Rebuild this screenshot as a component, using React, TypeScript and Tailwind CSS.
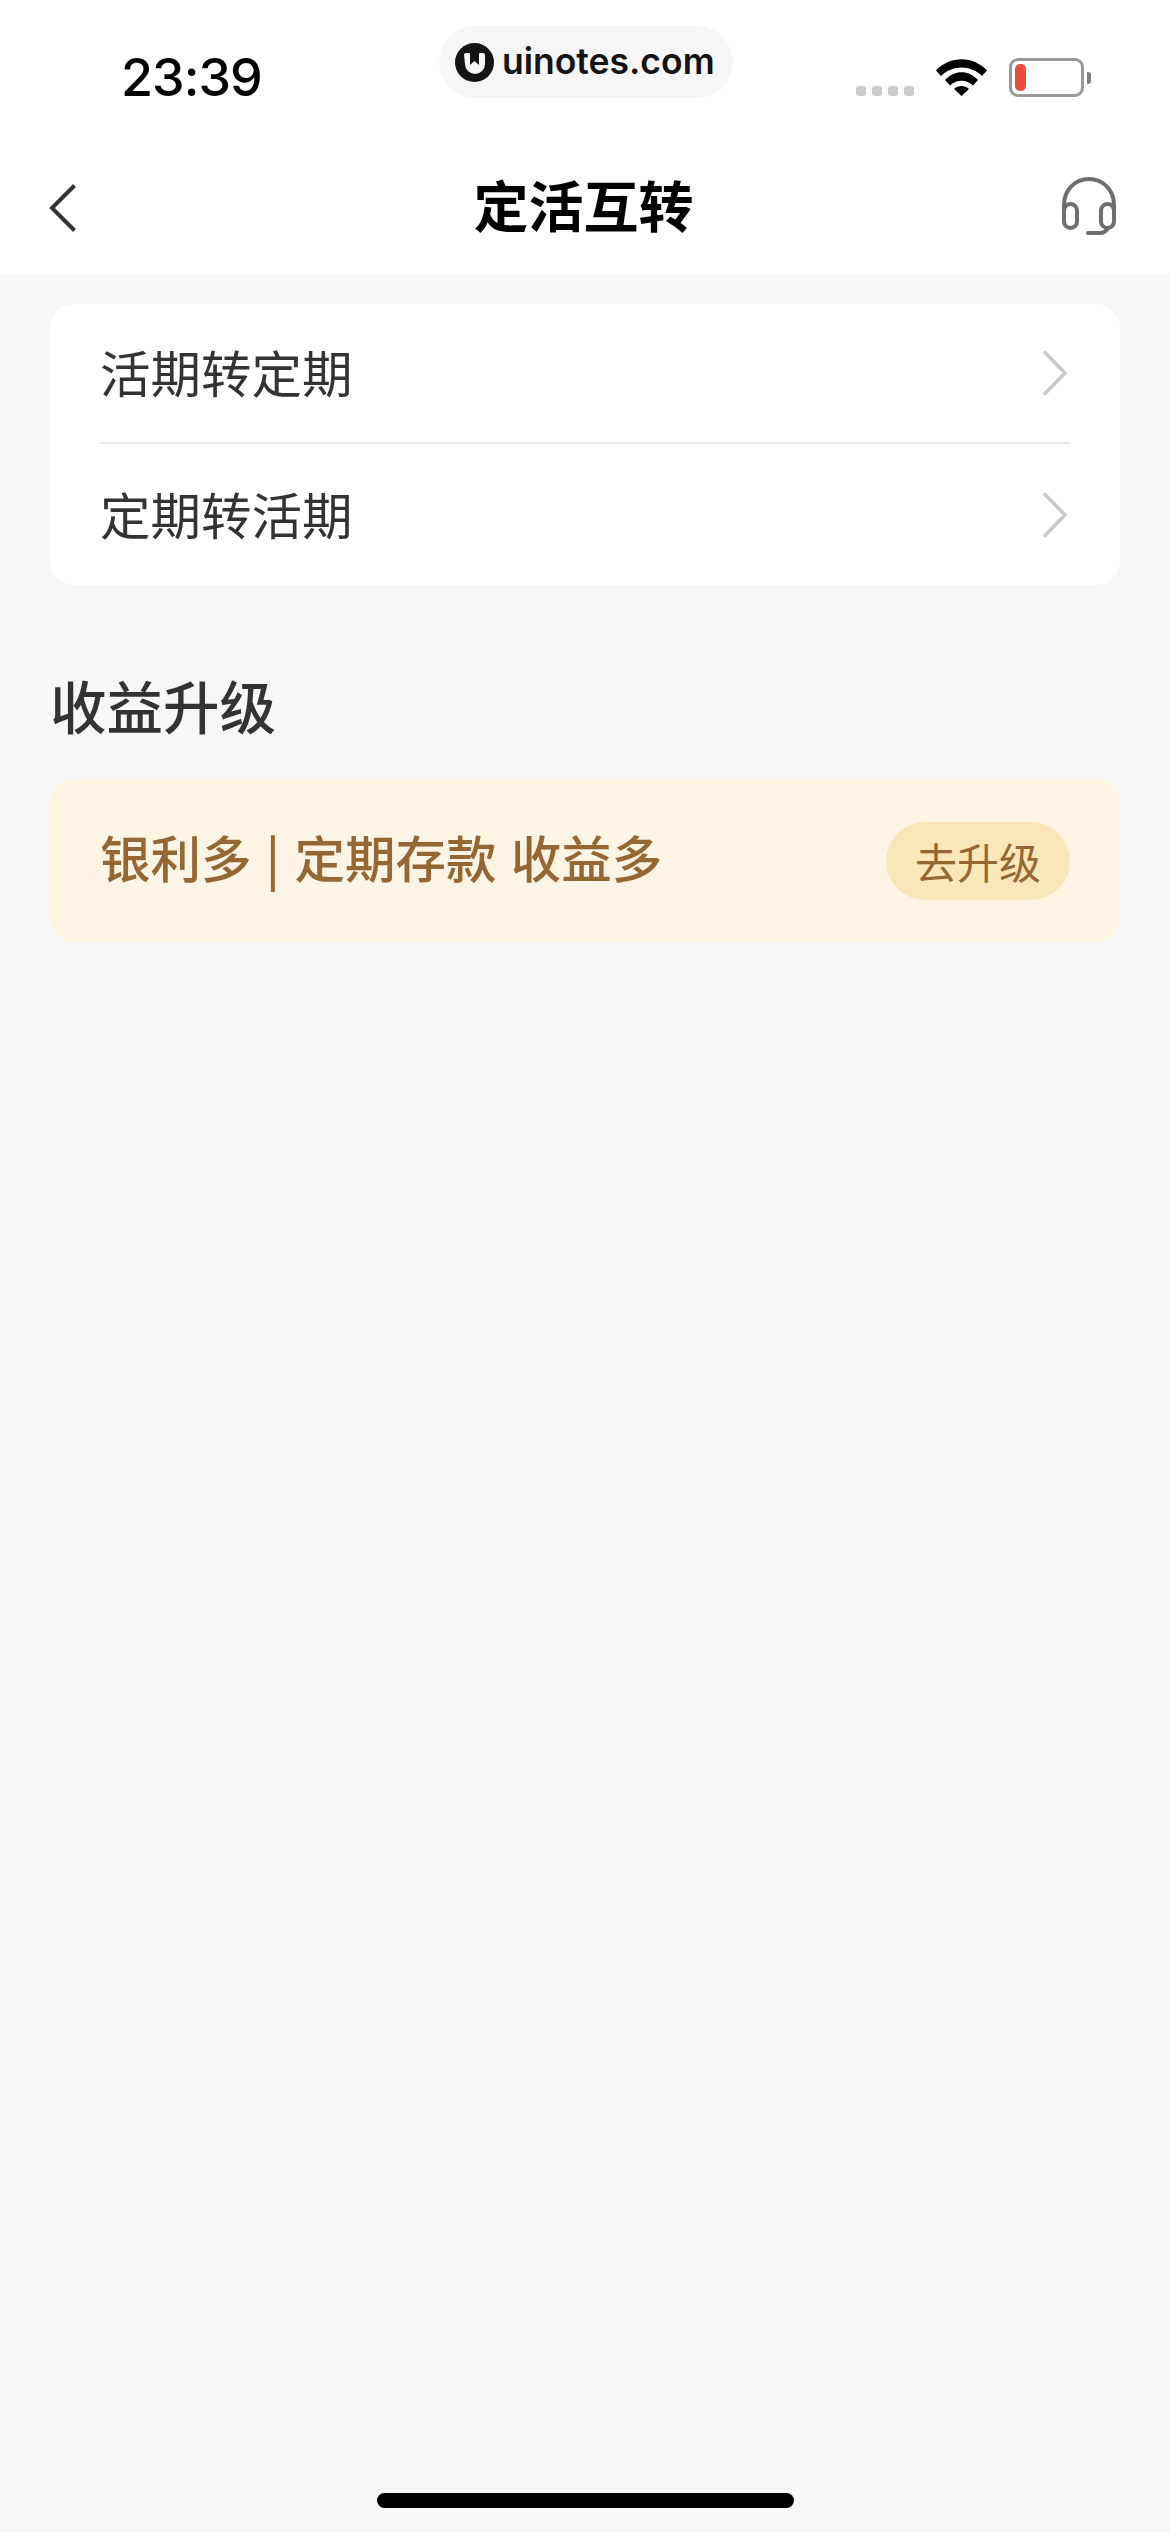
const FONT_CJK = "font-['Noto_Sans_CJK_SC','Noto_Sans',sans-serif]";

function Logo() {
  return (
    <svg width="39" height="39" viewBox="0 0 39 39" className="shrink-0">
      <circle cx="19.5" cy="19.5" r="19.5" fill="#141414" />
      <path
        d="M9 12a2 2 0 0 1 2-2h3a1 1 0 0 1 1 1v11l4.500-4 4.500 4V11a1 1 0 0 1 1-1h3a2 2 0 0 1 2 2v9a10 10 0 0 1-20 0z"
        fill="#f6f6f6"
      />
    </svg>
  );
}

function Wifi() {
  return (
    <svg width="51" height="37" viewBox="0 0 51 37" className="mt-[59px] ml-[22px]">
      <path d="M0 11.500C14-3.500 37-3.500 51 11.500l-5 5.500C34.500 5.500 16.500 5.500 5 17z" fill="#000" />
      <path d="M9 21C18.500 10.500 32.500 10.500 42 21l-5 5.500c-6.500-6.500-16.500-6.500-23 0z" fill="#000" />
      <path d="M18 30c4-4 11-4 15 0l-7.500 7z" fill="#000" />
    </svg>
  );
}

function Battery() {
  return (
    <div className="mt-[58px] ml-[22px] flex items-center">
      <div className="flex h-[39px] w-[75px] items-center rounded-[9px] border-[3px] border-[#999999] pl-[3px]">
        <div className="h-[27px] w-[11px] rounded-[5px] bg-[#e94b3c]" />
      </div>
      <div className="ml-[3px] h-[12px] w-[4px] rounded-r-[3px] bg-[#808080]" />
    </div>
  );
}

function Headset() {
  return (
    <svg width="58" height="60" viewBox="0 0 58 60" fill="none" stroke="#6e6e6e" strokeWidth="4" strokeLinecap="round">
      <path d="M4 36V29C4 14 15 3 29 3s25 11 25 26v7" />
      <rect x="4" y="28" width="13" height="24" rx="6.500" />
      <rect x="41" y="28" width="13" height="24" rx="6.500" />
      <path d="M28 57h12c3 0 6-1.500 8-5" />
    </svg>
  );
}

function Chevron() {
  return (
    <svg width="24" height="46" viewBox="0 0 24 46" fill="none" stroke="#c8c8c8" strokeWidth="3.500" className="mr-[3px]">
      <path d="M1 1.500L22 23 1 44.500" />
    </svg>
  );
}

function Row({ label, divider }: { label: string; divider?: boolean }) {
  return (
    <div
      className={
        divider
          ? "flex h-[140px] items-center justify-between border-b-2 border-[#e8e8e8]"
          : "flex h-[141px] items-center justify-between"
      }
    >
      <span className="pb-[4px] text-[50.5px] leading-[60px] text-[#333333]">{label}</span>
      <Chevron />
    </div>
  );
}

export default function App() {
  return (
    <div className={`flex h-[2532px] w-[1170px] flex-col overflow-hidden bg-[#f7f7f7] ${FONT_CJK}`}>
      <div className="h-[274px] bg-white">
        <div className="flex h-[160px] items-start">
          <span className="mt-[48px] ml-[121px] w-[318px] font-['Inter',sans-serif] text-[52px] leading-[60px] font-medium tracking-[-1px] text-black">
            23:39
          </span>
          <div className="mt-[26px] flex h-[72px] w-[294px] items-center gap-[8px] rounded-[36px] bg-[#f6f6f6] pl-[16px]">
            <Logo />
            <span className="font-['Inter',sans-serif] text-[35.5px] leading-[44px] font-semibold text-[#141414]">
              uinotes.com
            </span>
          </div>
          <div className="mt-[86px] ml-[123px] flex gap-[6px]">
            <div className="h-[10px] w-[10px] rounded-[3px] bg-[#cccccc]" />
            <div className="h-[10px] w-[10px] rounded-[3px] bg-[#cccccc]" />
            <div className="h-[10px] w-[10px] rounded-[3px] bg-[#cccccc]" />
            <div className="h-[10px] w-[10px] rounded-[3px] bg-[#cccccc]" />
          </div>
          <Wifi />
          <Battery />
        </div>
        <div className="flex h-[114px] items-start justify-between pr-[52px] pl-[49px]">
          <div className="w-[58px]">
            <svg width="27" height="48" viewBox="0 0 27 48" fill="none" stroke="#333333" strokeWidth="4" className="mt-[24px]">
              <path d="M25.500 1.500L3 24l22.500 22.500" />
            </svg>
          </div>
          <span className="mt-[15px] text-[55px] leading-[56px] font-bold text-black">定活互转</span>
          <div className="mt-[16px]">
            <Headset />
          </div>
        </div>
      </div>

      <div className="mx-[50px] mt-[30px] rounded-[24px] bg-white px-[50px]">
        <Row label="活期转定期" divider />
        <Row label="定期转活期" />
      </div>

      <h2 className="mt-[91px] ml-[50px] text-[56.5px] leading-[56px] font-medium text-[#333333]">收益升级</h2>

      <div className="mx-[50px] mt-[47px] flex h-[163px] items-center justify-between rounded-[24px] bg-[#fdf4e4] px-[50px]">
        <span className="pb-[10px] text-[50.5px] leading-[60px] font-medium whitespace-pre text-[#956734] [word-spacing:3px]">
          银利多 | 定期存款 收益多
        </span>
        <div className="flex h-[78px] w-[184px] items-center justify-center rounded-[39px] bg-[#fae6b8] text-[42px] leading-[50px] text-[#956734]">
          去升级
        </div>
      </div>

      <div className="mt-auto mb-[24px] h-[15px] w-[417px] self-center rounded-[8px] bg-black" />
    </div>
  );
}
